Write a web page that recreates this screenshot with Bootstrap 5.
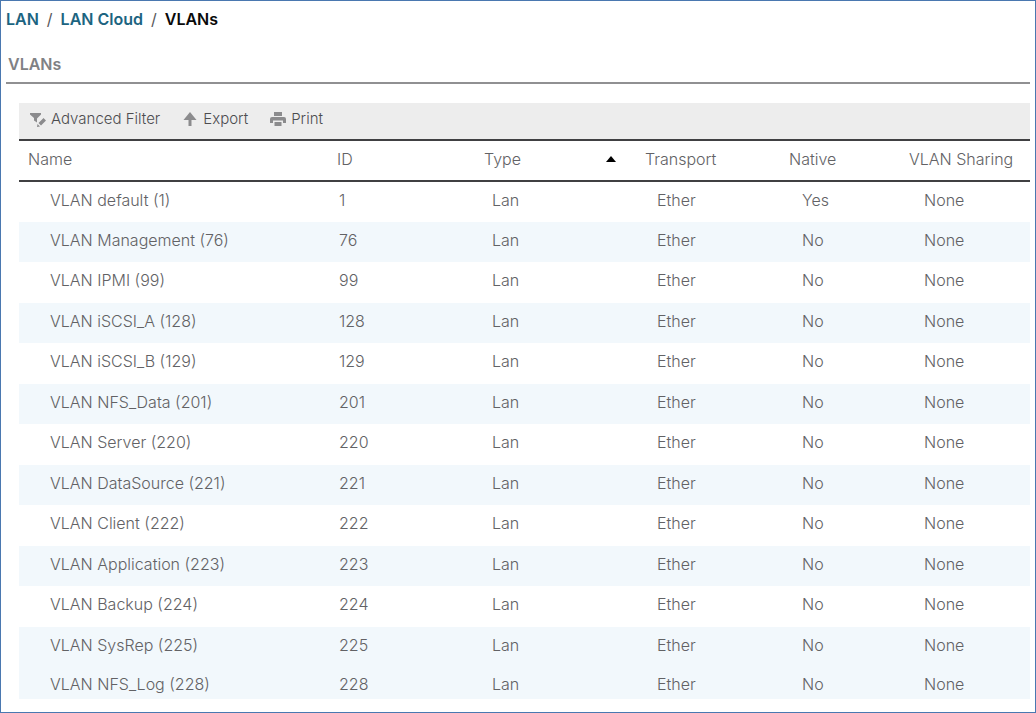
<!DOCTYPE html>
<html lang="en">
<head>
<meta charset="utf-8">
<meta name="viewport" content="width=device-width, initial-scale=1">
<title>VLANs</title>
<link href="https://cdn.jsdelivr.net/npm/bootstrap@5.3.0/dist/css/bootstrap.min.css" rel="stylesheet">
<style>
  body { font-family: Inter, "Liberation Sans", sans-serif; font-size: 16px; line-height: 20px; color: #58585b; background: #fff; }
  .page-frame { border: 1px solid #4a78b0; padding: 8px 5px 0; }
  .crumbs { --bs-breadcrumb-divider-color: #58585b; font-weight: 600; }
  .crumbs a { color: #1c6481; }
  .crumbs .active { color: #0a0a0a; }
  .crumbs .breadcrumb-item + .breadcrumb-item::before { font-weight: 400; }
  .page-title { font-size: 16px; line-height: 20px; font-weight: 600; color: #808184; padding: 25px 2px 8px; border-bottom: 2px solid #909092; }
  .grid-panel { margin: 19px 0 0 13px; }
  .tools { background: #ededed; border-bottom: 2px solid #404042; height: 38px; padding: 0 11px 4px; gap: 22px; }
  .tools .btn { --bs-btn-color: #4c4c4f; --bs-btn-font-size: 15px; --bs-btn-font-weight: 300; --bs-btn-line-height: 20px; gap: 5px; }
  .tools svg { fill: #8b8b8d; }
  .vlans { table-layout: fixed; --bs-table-color: #626265; font-weight: 300; }
  .vlans th, .vlans td { border: 0; white-space: nowrap; }
  .vlans th { font-weight: 300; height: 40px; padding: 8px 9px; vertical-align: top; }
  .vlans thead tr { border-bottom: 2px solid #404042; }
  .vlans td { height: 41px; padding: 8px 0 0; }
  .vlans tbody tr:nth-child(even), .vlans tbody tr:last-child { --bs-table-bg: #f2f8fc; }
  .vlans tbody tr:nth-child(even) td { height: 40px; }
  .vlans tbody tr:nth-last-child(2) td { height: 39px; }
  .vlans tbody tr:last-child td { height: 33px; }
  .vlans td:nth-child(1) { padding-left: 31px; }
  .vlans td:nth-child(2) { padding-left: 11px; }
  .vlans td:nth-child(3) { padding-left: 17px; }
  .vlans td:nth-child(4) { padding-left: 21px; }
  .vlans td:nth-child(5) { padding-left: 22px; }
  .vlans td:nth-child(6) { padding-left: 24px; }
  .w-id { width: 147px; } .w-type { width: 161px; } .w-transport { width: 144px; } .w-native { width: 120px; } .w-sharing { width: 130px; }
  .sort-head { padding-right: 11px; }
  .sort-head svg { fill: #000; }
</style>
</head>
<body>
<div class="page-frame min-vh-100">
  <nav aria-label="breadcrumb">
    <ol class="breadcrumb crumbs mb-0">
      <li class="breadcrumb-item"><a class="text-decoration-none" href="#">LAN</a></li>
      <li class="breadcrumb-item"><a class="text-decoration-none" href="#">LAN Cloud</a></li>
      <li class="breadcrumb-item active" aria-current="page">VLANs</li>
    </ol>
  </nav>
  <h1 class="page-title mb-0">VLANs</h1>
  <main class="grid-panel">
    <div class="tools d-flex align-items-center">
      <button type="button" class="btn border-0 p-0 d-flex align-items-center">
        <svg width="16" height="16" viewBox="0 0 16 16" aria-hidden="true"><path d="M0 2h11v1.500L7 7.500V11.500L4 9.500V7L0 3.500z"/><path d="M8.500 12 13.500 7 16 9.500 11 14.500zM7.500 13 10 15.500 7 16z"/></svg>
        Advanced Filter
      </button>
      <button type="button" class="btn border-0 p-0 d-flex align-items-center">
        <svg width="16" height="16" viewBox="0 0 16 16" aria-hidden="true"><path d="M8 1 14.500 9H9.500V15h-3V9H1.500z"/></svg>
        Export
      </button>
      <button type="button" class="btn border-0 p-0 d-flex align-items-center">
        <svg width="16" height="16" viewBox="0 0 16 16" aria-hidden="true"><path d="M4 1h8v4H4zM2 6h12q2 0 2 2v4h-3V9.500H3V12H0V8q0-2 2-2zM4.500 11h7v4h-7z"/></svg>
        Print
      </button>
    </div>
    <table class="table vlans mb-0">
      <colgroup><col><col class="w-id"><col class="w-type"><col class="w-transport"><col class="w-native"><col class="w-sharing"></colgroup>
      <thead>
        <tr>
          <th scope="col">Name</th><th scope="col">ID</th>
          <th scope="col" aria-sort="ascending"><span class="sort-head d-flex justify-content-between align-items-center">Type <svg width="10" height="6" viewBox="0 0 10 6" aria-hidden="true"><path d="M0 6 5 0l5 6z"/></svg></span></th>
          <th scope="col">Transport</th><th scope="col">Native</th><th scope="col">VLAN Sharing</th>
        </tr>
      </thead>
      <tbody>
        <tr><td>VLAN default (1)</td><td>1</td><td>Lan</td><td>Ether</td><td>Yes</td><td>None</td></tr>
        <tr><td>VLAN Management (76)</td><td>76</td><td>Lan</td><td>Ether</td><td>No</td><td>None</td></tr>
        <tr><td>VLAN IPMI (99)</td><td>99</td><td>Lan</td><td>Ether</td><td>No</td><td>None</td></tr>
        <tr><td>VLAN iSCSI_A (128)</td><td>128</td><td>Lan</td><td>Ether</td><td>No</td><td>None</td></tr>
        <tr><td>VLAN iSCSI_B (129)</td><td>129</td><td>Lan</td><td>Ether</td><td>No</td><td>None</td></tr>
        <tr><td>VLAN NFS_Data (201)</td><td>201</td><td>Lan</td><td>Ether</td><td>No</td><td>None</td></tr>
        <tr><td>VLAN Server (220)</td><td>220</td><td>Lan</td><td>Ether</td><td>No</td><td>None</td></tr>
        <tr><td>VLAN DataSource (221)</td><td>221</td><td>Lan</td><td>Ether</td><td>No</td><td>None</td></tr>
        <tr><td>VLAN Client (222)</td><td>222</td><td>Lan</td><td>Ether</td><td>No</td><td>None</td></tr>
        <tr><td>VLAN Application (223)</td><td>223</td><td>Lan</td><td>Ether</td><td>No</td><td>None</td></tr>
        <tr><td>VLAN Backup (224)</td><td>224</td><td>Lan</td><td>Ether</td><td>No</td><td>None</td></tr>
        <tr><td>VLAN SysRep (225)</td><td>225</td><td>Lan</td><td>Ether</td><td>No</td><td>None</td></tr>
        <tr><td>VLAN NFS_Log (228)</td><td>228</td><td>Lan</td><td>Ether</td><td>No</td><td>None</td></tr>
      </tbody>
    </table>
  </main>
</div>
<script src="https://cdn.jsdelivr.net/npm/bootstrap@5.3.0/dist/js/bootstrap.bundle.min.js"></script>
</body>
</html>
